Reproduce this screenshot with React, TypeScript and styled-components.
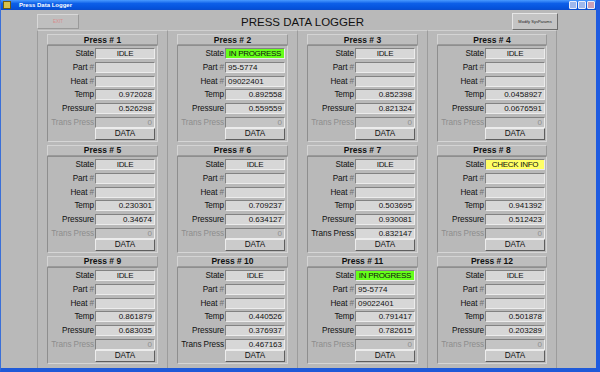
import React from 'react';
import styled, { createGlobalStyle } from 'styled-components';

const GlobalStyle = createGlobalStyle`
  body {
    margin: 0;
    background: #b9b9b9;
    font-family: "Liberation Sans", Arial, sans-serif;
  }
`;

type PressData = {
  state: string;
  part?: string;
  heat?: string;
  temp: string;
  pressure: string;
  trans?: string;
};

const presses: PressData[] = [
  { state: 'IDLE', temp: '0.972028', pressure: '0.526298' },
  { state: 'IN PROGRESS', part: '95-5774', heat: '09022401', temp: '0.892558', pressure: '0.559559' },
  { state: 'IDLE', temp: '0.852398', pressure: '0.821324' },
  { state: 'IDLE', temp: '0.0458927', pressure: '0.0676591' },
  { state: 'IDLE', temp: '0.230301', pressure: '0.34674' },
  { state: 'IDLE', temp: '0.709237', pressure: '0.634127' },
  { state: 'IDLE', temp: '0.503695', pressure: '0.930081', trans: '0.832147' },
  { state: 'CHECK INFO', temp: '0.941392', pressure: '0.512423' },
  { state: 'IDLE', temp: '0.861879', pressure: '0.683035' },
  { state: 'IDLE', temp: '0.440526', pressure: '0.376937', trans: '0.467163' },
  { state: 'IN PROGRESS', part: '95-5774', heat: '09022401', temp: '0.791417', pressure: '0.782615' },
  { state: 'IDLE', temp: '0.501878', pressure: '0.203289' },
];

const Window = styled.div`
  width: 600px;
  height: 372px;
  box-sizing: border-box;
  display: flex;
  flex-direction: column;
  border-left: 1px solid #3a6fd8;
  border-right: 4px solid #1e5be0;
  border-bottom: 4px solid #1f5ad8;
  overflow: hidden;
`;

const TitleBar = styled.div`
  height: 10px;
  flex-shrink: 0;
  display: flex;
  align-items: center;
  background: linear-gradient(180deg, #4a9bff 0%, #0d5fe8 35%, #0553dc 80%, #0a4ccc 100%);
  padding-left: 2px;
  gap: 8px;
`;

const AppIcon = styled.div`
  width: 6px;
  height: 6px;
  background: #d8c24a;
  border: 1px solid #6b5a14;
`;

const TitleText = styled.span`
  color: #ffffff;
  font-size: 6px;
  font-weight: bold;
  flex: 1;
`;

const WinButtons = styled.div`
  display: flex;
  gap: 1px;
  padding-right: 1px;
`;

const WinButton = styled.div<{ $close?: boolean }>`
  width: 8px;
  height: 8px;
  box-sizing: border-box;
  border: 1px solid #e8eefc;
  border-radius: 1px;
  background: ${p => (p.$close ? '#c9a0b8' : '#9fb8ec')};
`;

const Body = styled.div`
  flex: 1;
  display: flex;
  flex-direction: column;
  background: #b9b9b9;
  min-height: 0;
`;

const TopBar = styled.div`
  height: 20px;
  flex-shrink: 0;
  display: flex;
  align-items: center;
  padding-left: 36px;
  padding-right: 38px;
`;

const ExitButton = styled.div`
  width: 42px;
  height: 15px;
  margin-top: 2px;
  box-sizing: border-box;
  background: #bfbfbf;
  border: 1px solid;
  border-color: #d8d8d8 #9a9a9a #9a9a9a #d8d8d8;
  color: #d98c8c;
  font-size: 4.5px;
  display: flex;
  align-items: center;
  justify-content: center;
`;

const Title = styled.div`
  flex: 1;
  text-align: center;
  font-size: 11.5px;
  color: #111;
  padding-left: 14px;
  margin-top: 3px;
`;

const ModifyButton = styled.div`
  width: 46px;
  height: 17px;
  margin-top: 3px;
  box-sizing: border-box;
  background: #c4c4c4;
  border: 1px solid;
  border-color: #e6e6e6 #6c6c6c #6c6c6c #e6e6e6;
  color: #222;
  font-size: 4px;
  display: flex;
  align-items: center;
  justify-content: center;
  white-space: nowrap;
`;

const Grid = styled.div`
  flex: 1;
  display: flex;
  padding-left: 36px;
  min-height: 0;
`;

const Column = styled.div`
  width: 130px;
  box-sizing: border-box;
  display: flex;
  flex-direction: column;
  gap: 3px;
  padding: 3px 9px 0 9px;
  border-left: 1px solid #9c9c9c;
  border-top: 1px solid #d0d0d0;
  &:last-child {
    border-right: 1px solid #9c9c9c;
  }
`;

const Card = styled.div`
  display: flex;
  flex-direction: column;
`;

const CardHeader = styled.div`
  height: 11px;
  box-sizing: border-box;
  border: 1px solid;
  border-color: #d4d4d4 #999 #999 #d4d4d4;
  background: #bdbdbd;
  font-size: 8.5px;
  font-weight: bold;
  color: #111;
  display: flex;
  align-items: center;
  justify-content: center;
`;

const CardBody = styled.div`
  box-sizing: border-box;
  border: 1px solid;
  border-color: #8e8e8e #d6d6d6 #d6d6d6 #8e8e8e;
  padding: 2px 0 1px 0;
  display: flex;
  flex-direction: column;
  gap: 2.8px;
`;

const Row = styled.div`
  display: flex;
  align-items: center;
  height: 11px;
`;

const Label = styled.div<{ $disabled?: boolean }>`
  width: 47px;
  box-sizing: border-box;
  padding-right: 1px;
  text-align: right;
  font-size: 8.2px;
  letter-spacing: -0.1px;
  white-space: nowrap;
  color: ${p => (p.$disabled ? '#8d8d8d' : '#111')};
`;

const Hash = styled.span`
  color: #6e6e6e;
`;

const Field = styled.div<{ $bg?: string; $align?: string; $disabled?: boolean }>`
  width: 60px;
  height: 11px;
  box-sizing: border-box;
  border: 1px solid;
  border-color: #828282 #ececec #ececec #828282;
  background: ${p => p.$bg || (p.$disabled ? '#c4c4c4' : '#d7d7d7')};
  color: ${p => (p.$disabled ? '#8f8f8f' : '#111')};
  font-size: 8px;
  letter-spacing: ${p => (p.$align === 'center' ? '-0.3px' : '0')};
  line-height: 9px;
  padding: 0 2px;
  text-align: ${p => p.$align || 'left'};
  white-space: nowrap;
  overflow: hidden;
`;

const DataButton = styled.div`
  width: 60px;
  height: 12px;
  margin-left: 47px;
  margin-top: -2.8px;
  box-sizing: border-box;
  border: 1px solid;
  border-color: #ececec #5e5e5e #5e5e5e #ececec;
  background: #cbcbcb;
  font-size: 8.2px;
  color: #111;
  display: flex;
  align-items: center;
  justify-content: center;
`;

const stateColor = (s: string) => {
  if (s === 'IN PROGRESS') return '#66ff1a';
  if (s === 'CHECK INFO') return '#ffff66';
  return undefined;
};

const PressCard = ({ n, d }: { n: number; d: PressData }) => {
  const transOn = d.trans !== undefined;
  return (
    <Card>
      <CardHeader>Press # {n}</CardHeader>
      <CardBody>
        <Row>
          <Label>State</Label>
          <Field $bg={stateColor(d.state)} $align="center">{d.state}</Field>
        </Row>
        <Row>
          <Label>Part <Hash>#</Hash></Label>
          <Field>{d.part}</Field>
        </Row>
        <Row>
          <Label>Heat <Hash>#</Hash></Label>
          <Field>{d.heat}</Field>
        </Row>
        <Row>
          <Label>Temp</Label>
          <Field $align="right">{d.temp}</Field>
        </Row>
        <Row>
          <Label>Pressure</Label>
          <Field $align="right">{d.pressure}</Field>
        </Row>
        <Row>
          <Label $disabled={!transOn}>Trans Press</Label>
          <Field $align="right" $disabled={!transOn}>{transOn ? d.trans : '0'}</Field>
        </Row>
        <DataButton>DATA</DataButton>
      </CardBody>
    </Card>
  );
};

const App = () => {
  const cols = [0, 1, 2, 3];
  return (
    <>
      <GlobalStyle />
      <Window>
        <TitleBar>
          <AppIcon />
          <TitleText>Press Data Logger</TitleText>
          <WinButtons>
            <WinButton />
            <WinButton />
            <WinButton $close />
          </WinButtons>
        </TitleBar>
        <Body>
          <TopBar>
            <ExitButton>EXIT</ExitButton>
            <Title>PRESS DATA LOGGER</Title>
            <ModifyButton>Modify SysParams</ModifyButton>
          </TopBar>
          <Grid>
            {cols.map(c => (
              <Column key={c}>
                {[0, 1, 2].map(r => {
                  const i = r * 4 + c;
                  return <PressCard key={i} n={i + 1} d={presses[i]} />;
                })}
              </Column>
            ))}
          </Grid>
        </Body>
      </Window>
    </>
  );
};

export default App;
